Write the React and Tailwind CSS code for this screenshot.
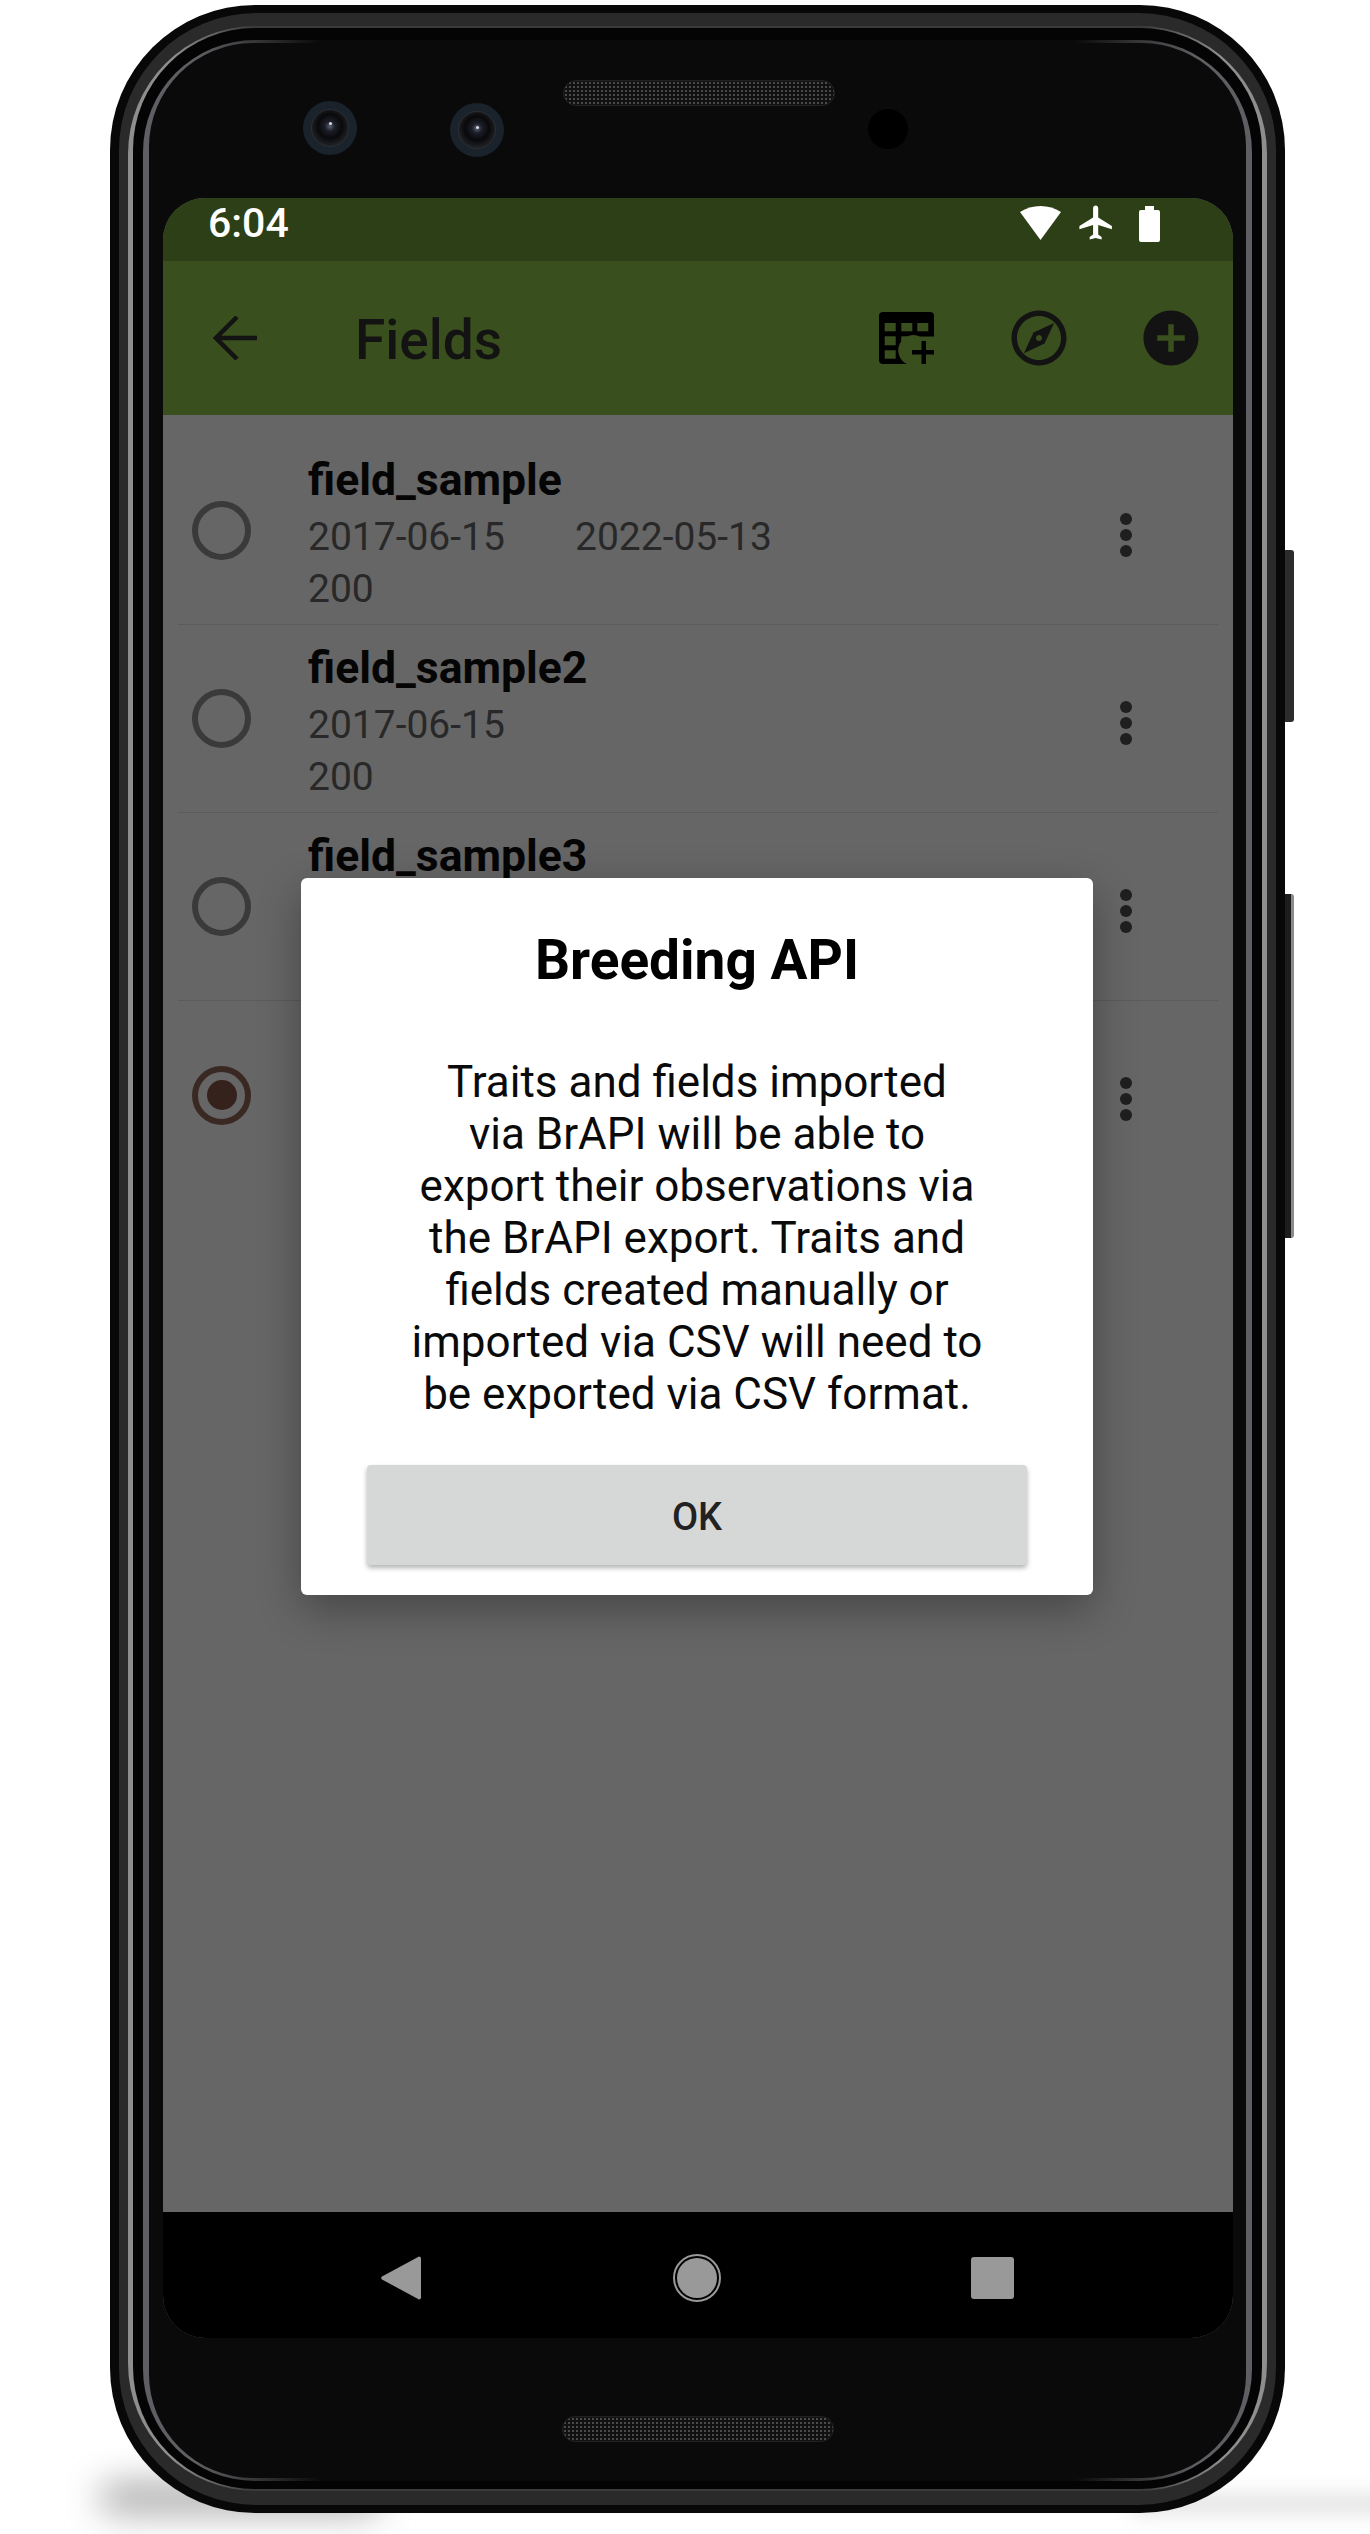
const font = { fontFamily: "Roboto, 'Liberation Sans', sans-serif" };

function Camera({ className, lens }) {
  return (
    <div className={`w-[54px] h-[54px] rounded-full bg-[#1a232b] flex items-center justify-center shrink-0 ${className}`}>
      <div className="w-[38px] h-[38px] rounded-full border border-[#2c2e33] bg-[radial-gradient(circle_at_50%_45%,#5a6378_0px,#1c1e28_5px,#09090b_12px,#1f2024_19px)] relative">
        <div className={`absolute w-[3px] h-[3px] rounded-full bg-[#ddd] left-[17px] ${lens}`} />
      </div>
    </div>
  );
}

function Speaker({ className = "" }) {
  return (
    <div className={`w-[272px] h-[26px] rounded-full border border-[#222] bg-[#111] bg-[radial-gradient(#4a4a4a_1px,transparent_1.2px)] bg-[length:4px_4px] shrink-0 ${className}`} />
  );
}

function Radio({ selected }) {
  return (
    <div className={`w-[59px] h-[59px] rounded-full border-[6px] flex items-center justify-center shrink-0 ${selected ? "border-[#3a2823]" : "border-[#3a3a3a]"}`}>
      {selected && <div className="w-[30px] h-[30px] rounded-full bg-[#35221d]" />}
    </div>
  );
}

function Dots() {
  return (
    <div className="flex flex-col gap-[4px] mt-[8px] shrink-0">
      <div className="w-[12px] h-[12px] rounded-full bg-[#1f1f1f]" />
      <div className="w-[12px] h-[12px] rounded-full bg-[#1f1f1f]" />
      <div className="w-[12px] h-[12px] rounded-full bg-[#1f1f1f]" />
    </div>
  );
}

function Row({ name, date, date2, count, selected, last }) {
  return (
    <div className={`h-[188px] mx-[15px] flex items-center pl-[14px] pr-[86px] ${last ? "" : "border-b border-[#5b5b5b]"}`}>
      <Radio selected={selected} />
      <div className="flex-1 ml-[57px] h-full pt-[15px]">
        {name && <div className="text-[44.5px] leading-[57px] font-bold text-[#050505]">{name}</div>}
        {date && (
          <div className="flex text-[39px] leading-[52px] mt-[2px] text-[#282828]">
            <span className="w-[267px]">{date}</span>
            {date2 && <span>{date2}</span>}
          </div>
        )}
        {count && <div className="text-[39px] leading-[52px] text-[#282828]">{count}</div>}
      </div>
      <Dots />
    </div>
  );
}

export default function App() {
  return (
    <div className="relative w-[1370px] h-[2534px] bg-white overflow-hidden pt-[5px] pl-[110px]" style={font}>
      {/* soft floor shadow */}
      <div className="absolute left-[100px] top-[2484px] w-[280px] h-[28px] rounded-full bg-[#a0a0a0] blur-[18px]" />
      <div className="absolute left-[1130px] top-[2494px] w-[300px] h-[20px] rounded-full bg-[#e2e2e2] blur-[10px]" />

      {/* side buttons */}
      <div className="absolute left-[1283px] top-[550px] w-[11px] h-[172px] rounded-r-[3px] bg-[#2c2c2c]" />
      <div className="absolute left-[1283px] top-[894px] w-[11px] h-[344px] rounded-r-[3px] bg-[#1d1d1d] border-r-[3px] border-[#8a8a8a]" />

      <div className="relative w-[1175px] h-[2508px] rounded-[145px] bg-[#080808] pt-[8px] px-[9px] pb-[8px]">
        <div className="w-full h-full rounded-[137px] bg-[#2a2a2a] pt-[13px] px-[9px] pb-[14px]">
          <div className="w-full h-full rounded-[128px] bg-[linear-gradient(to_right,#8e8e8e_0%,#8e8e8e_4%,#3a3a3a_11%,#3a3a3a_89%,#8e8e8e_96%,#8e8e8e_100%)] pt-[2px] px-[5px] pb-[2px]">
            <div className="w-full h-full rounded-[122px] bg-[#040404] pt-[12px] px-[10px] pb-[8px]">
              <div className="w-full h-full rounded-[112px] bg-[linear-gradient(to_right,#5e5e63_0%,#5e5e63_5%,#0a0a0a_16%,#0a0a0a_84%,#5e5e63_95%,#5e5e63_100%)] pt-[3px] px-[6px] pb-[3px]">
                <div className="w-full h-full rounded-[104px] bg-[#0a0a0a] flex flex-col overflow-hidden">
                  {/* top bezel */}
                  <div className="h-[155px] shrink-0 flex items-start pt-[37px] pl-[154px]">
                    <Camera className="mt-[21px]" lens="top-[12px]" />
                    <Camera className="mt-[23px] ml-[93px]" lens="top-[14px]" />
                    <Speaker className="ml-[59px]" />
                    <div className="w-[40px] h-[40px] rounded-full bg-black mt-[29px] ml-[33px] shrink-0" />
                  </div>

                  {/* screen */}
                  <div className="relative ml-[14px] w-[1070px] h-[2140px] shrink-0 rounded-[42px] overflow-hidden bg-[#666666] flex flex-col">
                    <div className="h-[63px] shrink-0 bg-[#2c3f16] flex items-center pl-[45px] pr-[73px] pb-[12px]">
                      <span className="text-white text-[41px] font-medium leading-none flex-1">6:04</span>
                      <svg width="41" height="34" viewBox="0 0 41 34" className="mt-[-2px]">
                        <path d="M20.5 34 0 6C6 2 13 0 20.5 0S35 2 41 6L20.5 34z" fill="#fff" />
                      </svg>
                      <svg width="41" height="41" viewBox="0 0 24 24" className="ml-[15px] mt-[-2px]">
                        <path d="M21 16v-2l-8-5V3.5c0-.83-.67-1.5-1.5-1.5S10 2.67 10 3.5V9l-8 5v2l8-2.5V19l-2 1.5V22l3.5-1 3.5 1v-1.5L13 19v-5.5l8 2.5z" fill="#fff" />
                      </svg>
                      <svg width="21" height="36" viewBox="0 0 21 36" className="ml-[22px]">
                        <path d="M6 0h9v4h4a2 2 0 0 1 2 2v28a2 2 0 0 1-2 2H2a2 2 0 0 1-2-2V6a2 2 0 0 1 2-2h4V0z" fill="#fff" />
                      </svg>
                    </div>

                    <div className="h-[154px] shrink-0 bg-[#3a4f1e] flex items-center pl-[50px] pr-[29px]">
                      <svg width="44" height="44" viewBox="0 0 44 44" fill="none" stroke="#131313" strokeWidth="4.5" className="shrink-0">
                        <path d="M44 22H3M24 1 3 22l21 21" />
                      </svg>
                      <span className="ml-[98px] flex-1 text-[55px] font-medium text-[#131313] leading-none mt-[4px]">Fields</span>
                      <svg width="55" height="52" viewBox="0 0 55 52" className="shrink-0">
                        <rect width="55" height="52" rx="4" fill="#000" />
                        <g fill="#3a4f1e">
                          <rect x="5.7" y="11" width="11" height="8.3" />
                          <rect x="22.3" y="11" width="11" height="8.3" />
                          <rect x="38.3" y="11" width="11" height="8.3" />
                          <rect x="5.7" y="24.3" width="11" height="9" />
                          <rect x="22.3" y="24.3" width="11" height="9" />
                          <rect x="5.7" y="38.3" width="11" height="8.4" />
                          <path d="M41 24.5h14V52H28a15 15 0 0 1 13-27.5z" />
                        </g>
                        <path d="M33 38h9.5v-9h4.5v9h8v4.5h-8V52h-4.5v-9.5H33z" fill="#000" />
                      </svg>
                      <svg width="66" height="66" viewBox="0 0 24 24" className="ml-[72px] shrink-0">
                        <path fill="#131313" d="M6.5 17.5l7.51-3.49L17.5 6.5 9.99 9.99 6.5 17.5zm5.5-6.6c.61 0 1.1.49 1.1 1.1s-.49 1.1-1.1 1.1-1.1-.49-1.1-1.1.49-1.1 1.1-1.1zM12 2C6.48 2 2 6.48 2 12s4.48 10 10 10 10-4.48 10-10S17.52 2 12 2zm0 18c-4.41 0-8-3.59-8-8s3.59-8 8-8 8 3.59 8 8-3.59 8-8 8z" />
                      </svg>
                      <svg width="66" height="66" viewBox="0 0 24 24" className="ml-[66px] shrink-0">
                        <path fill="#131313" d="M12 2C6.48 2 2 6.48 2 12s4.48 10 10 10 10-4.48 10-10S17.52 2 12 2zm5 11h-4v4h-2v-4H7v-2h4V7h2v4h4v2z" />
                      </svg>
                    </div>

                    <div className="flex-1 min-h-0 pt-[22px] overflow-hidden">
                      <Row name="field_sample" date="2017-06-15" date2="2022-05-13" count="200" />
                      <Row name="field_sample2" date="2017-06-15" count="200" />
                      <Row name="field_sample3" />
                      <Row selected last />
                    </div>

                    <div className="h-[126px] shrink-0 bg-black flex items-center pt-[6px] pl-[218px]">
                      <svg width="40" height="44" viewBox="0 0 40 44" className="shrink-0">
                        <path d="M38 0.5a2 2 0 0 1 2 2v39a2 2 0 0 1-2 2L1 23.5a2 2 0 0 1 0-3L38 .5z" fill="#999" />
                      </svg>
                      <div className="ml-[252px] w-[48px] h-[48px] rounded-full border-[2px] border-[#999] p-[2px] shrink-0">
                        <div className="w-full h-full rounded-full bg-[#999]" />
                      </div>
                      <div className="ml-[250px] w-[43px] h-[42px] rounded-[3px] bg-[#999] shrink-0" />
                    </div>

                    {/* dialog */}
                    <div className="absolute left-[138px] top-[680px] w-[792px] h-[717px] rounded-[6px] bg-white shadow-[0_14px_44px_rgba(0,0,0,0.32)] flex flex-col items-center pt-[53px]">
                      <div className="text-[55px] leading-[58px] font-bold text-black">Breeding API</div>
                      <div className="mt-[67px] text-[44px] leading-[52px] text-center text-[#0a0a0a]">
                        Traits and fields imported<br />
                        via BrAPI will be able to<br />
                        export their observations via<br />
                        the BrAPI export. Traits and<br />
                        fields created manually or<br />
                        imported via CSV will need to<br />
                        be exported via CSV format.
                      </div>
                      <div className="mt-[45px] w-[660px] h-[100px] rounded-[4px] bg-[#d6d7d7] shadow-[0_3px_5px_rgba(0,0,0,0.3)] flex items-center justify-center pt-[4px] text-[38px] font-medium text-[#222]">
                        OK
                      </div>
                    </div>
                  </div>

                  {/* bottom bezel */}
                  <div className="flex-1 flex justify-center pt-[78px]">
                    <Speaker />
                  </div>
                </div>
              </div>
            </div>
          </div>
        </div>
      </div>
    </div>
  );
}
